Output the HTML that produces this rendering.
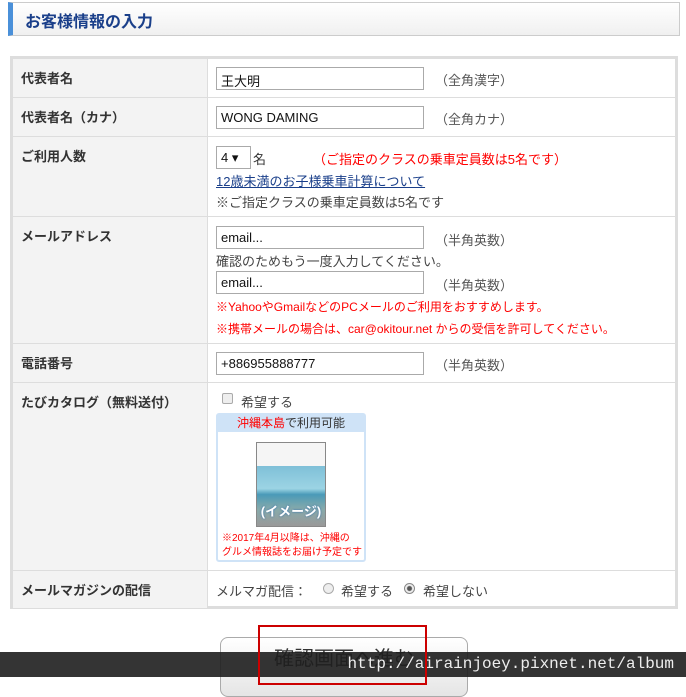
<!DOCTYPE html>
<html><head><meta charset="utf-8"><style>
*{box-sizing:border-box;margin:0;padding:0}
body{width:686px;height:677px;overflow:hidden;background:#fff;font-family:"Liberation Sans","Noto Sans CJK JP",sans-serif;font-size:13px;color:#333;position:relative}
.hd{position:absolute;left:8px;top:2px;width:672px;height:34px;border:1px solid #ccc;border-left:5px solid #4a90d9;background:linear-gradient(#fff,#f0f0f0);color:#1a3f8a;font-weight:bold;font-size:16px;padding:5px 0 0 12px}
.tb{position:absolute;left:10px;top:56px;width:668px;height:553px;border:3px solid #ddd;background:#fff}
.r{position:absolute;left:0;width:662px;border-bottom:1px solid #ddd}
.l{position:absolute;left:0;top:0;bottom:0;width:195px;background:#f3f3f3;border-right:1px solid #ddd;font-weight:bold;padding:9px 0 0 8px;font-size:13px}
.in{position:absolute;width:208px;height:23px;border:1px solid #aaa;background:#fff;padding:3px 4px;font-size:13px;color:#111}
.n{position:absolute;color:#555}
.red{color:#f00}
.t{position:absolute;white-space:nowrap}
</style></head><body>
<div class="hd">お客様情報の入力</div>
<div class="tb">
<div class="r" style="top:0;height:39px"><div class="l">代表者名</div><div class="in" style="left:203px;top:8px">王大明</div><div class="n" style="left:422px;top:11px">（全角漢字）</div></div>
<div class="r" style="top:39px;height:39px"><div class="l">代表者名（カナ）</div><div class="in" style="left:203px;top:8px">WONG DAMING</div><div class="n" style="left:422px;top:11px">（全角カナ）</div></div>
<div class="r" style="top:78px;height:80px"><div class="l">ご利用人数</div>
<div class="in" style="left:203px;top:9px;width:35px">4 ▾</div><div class="t" style="left:240px;top:12px">名</div>
<div class="t red" style="left:300px;top:12px">（ご指定のクラスの乗車定員数は5名です）</div>
<div class="t" style="left:203px;top:34px;color:#1a3f8a;text-decoration:underline">12歳未満のお子様乗車計算について</div>
<div class="t" style="left:203px;top:55px;color:#444">※ご指定クラスの乗車定員数は5名です</div></div>
<div class="r" style="top:158px;height:127px"><div class="l">メールアドレス</div>
<div class="in" style="left:203px;top:9px">email...</div><div class="n" style="left:422px;top:13px">（半角英数）</div>
<div class="t" style="left:203px;top:34px;color:#444">確認のためもう一度入力してください。</div>
<div class="in" style="left:203px;top:54px">email...</div><div class="n" style="left:422px;top:58px">（半角英数）</div>
<div class="t red" style="left:203px;top:81px;font-size:12px">※YahooやGmailなどのPCメールのご利用をおすすめします。</div>
<div class="t red" style="left:203px;top:103px;font-size:12px">※携帯メールの場合は、car@okitour.net からの受信を許可してください。</div></div>
<div class="r" style="top:285px;height:39px"><div class="l">電話番号</div><div class="in" style="left:203px;top:8px">+886955888777</div><div class="n" style="left:422px;top:11px">（半角英数）</div></div>
<div class="r" style="top:324px;height:188px"><div class="l">たびカタログ（無料送付）</div>
<div style="position:absolute;left:209px;top:10px;width:11px;height:11px;border:1px solid #aaa;border-radius:2px;background:#eee"></div>
<div class="t" style="left:228px;top:9px;color:#444">希望する</div>
<div style="position:absolute;left:203px;top:30px;width:150px;height:149px;border:2px solid #cfe3f7;border-radius:3px">
<div style="background:#cfe3f7;height:17px;text-align:center;font-size:12px;line-height:16px">
<span class="red">沖縄本島</span>で利用可能</div>
<div style="position:absolute;left:38px;top:27px;width:70px;height:85px;border:1px solid #888;background:linear-gradient(#f5f5f5 0 28%,#7fc0d8 28%,#9cd4e4 55%,#4a9ab8 62%,#8aa 80%,#999 100%)">
<div style="position:absolute;top:58px;left:0;width:100%;text-align:center;color:#fff;font-weight:bold;font-size:13px;text-shadow:0 0 2px #2a6ab0">(イメージ)</div></div>
<div class="t red" style="left:4px;top:117px;font-size:10px;line-height:14px">※2017年4月以降は、沖縄の<br>グルメ情報誌をお届け予定です</div></div></div>
<div class="r" style="top:512px;height:37px;border:0"><div class="l">メールマガジンの配信</div>
<div class="t" style="left:203px;top:10px;color:#444">メルマガ配信：</div>
<div style="position:absolute;left:310px;top:12px;width:11px;height:11px;border:1px solid #aaa;border-radius:50%;background:#eee"></div>
<div class="t" style="left:328px;top:10px;color:#444">希望する</div>
<div style="position:absolute;left:391px;top:12px;width:11px;height:11px;border:1px solid #888;border-radius:50%;background:radial-gradient(#555 0 2px,#eee 3px)"></div>
<div class="t" style="left:410px;top:10px;color:#444">希望しない</div></div>
</div>
<div style="position:absolute;left:220px;top:637px;width:248px;height:60px;border:1px solid #aaa;border-radius:8px;background:linear-gradient(#fff,#e5e5e5);text-align:center;font-size:20px;padding-top:4px;color:#333">確認画面へ進む</div>
<div style="position:absolute;left:0;top:652px;width:686px;height:25px;background:rgba(30,30,30,.9);color:#eee;font-family:'Liberation Mono',monospace;font-size:16px;text-align:right;padding:3px 12px 0 0">http://airainjoey.pixnet.net/album</div>
<div style="position:absolute;left:258px;top:625px;width:169px;height:60px;border:2px solid #c00"></div>
</body></html>
